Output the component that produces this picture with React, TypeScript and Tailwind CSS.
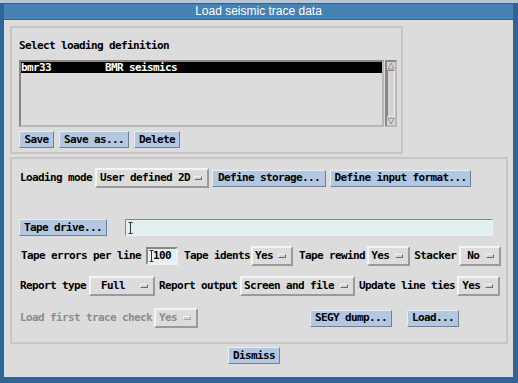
import React from "react";

const MONO = { fontFamily: '"DejaVu Sans Mono", "Liberation Mono", monospace' };

function Btn({ label, w, h = 17, className = "" }: { label: string; w: number; h?: number; className?: string }) {
  return (
    <div
      className={`flex shrink-0 items-center justify-center border border-t-[#e4eefa] border-l-[#e4eefa] border-b-[#6f7f94] border-r-[#6f7f94] bg-[#b3c7e0] text-black ${className}`}
      style={{ width: w, height: h }}
    >
      {label}
    </div>
  );
}

function Opt({
  label,
  w,
  pl = 3,
  dim = false,
  className = "",
}: {
  label: string;
  w: number;
  pl?: number;
  dim?: boolean;
  className?: string;
}) {
  return (
    <div
      className={`flex h-[20px] shrink-0 items-center border-2 border-t-[#f4f4f4] border-l-[#f4f4f4] border-b-[#9a9a9a] border-r-[#9a9a9a] bg-[#dcdcdc] pr-[5px] ${dim ? "text-[#8c8c8c]" : "text-black"} ${className}`}
      style={{ width: w, paddingLeft: pl }}
    >
      <span className="flex-1 whitespace-pre">{label}</span>
      <span className={`h-[4px] w-[8px] border border-t-[#f4f4f4] border-l-[#f4f4f4] ${dim ? "border-b-[#a8a8a8] border-r-[#a8a8a8]" : "border-b-[#6a6a6a] border-r-[#6a6a6a]"} bg-[#d0d0d0]`} />
    </div>
  );
}

function Label({ text, className = "", dim = false }: { text: string; className?: string; dim?: boolean }) {
  return <span className={`shrink-0 whitespace-pre ${dim ? "text-[#8c8c8c]" : "text-black"} ${className}`}>{text}</span>;
}

function Caret() {
  return (
    <svg width="5" height="12" viewBox="0 0 5 12" className="shrink-0">
      <path d="M0.5 0.5 H4.5 M2.5 0.5 V11.5 M0.5 11.5 H4.5" stroke="#333" strokeWidth="1" fill="none" />
    </svg>
  );
}

export default function App() {
  return (
    <div className="flex h-[383px] w-[518px] flex-col overflow-hidden bg-[#b9c5d1]">
      <div className="h-[3px] shrink-0" />
      <div className="flex flex-1 flex-col border-l-[4px] border-r-[5px] border-b-[6px] border-t-[1px] border-[#2f6494] bg-[#2f6494]">
        {/* title bar */}
        <div
          className="flex h-[15px] shrink-0 items-center justify-center bg-[#4682b4] text-[12px] leading-[15px] text-white"
          style={{ fontFamily: '"Liberation Sans", Arial, sans-serif' }}
        >
          Load seismic trace data
        </div>

        {/* dialog body */}
        <div
          className="flex flex-1 flex-col border-t border-[#5a5a5a] bg-[#dcdcdc] pl-[6px] pt-[6px] text-[11px] font-bold leading-[12px] tracking-[-0.62px]"
          style={MONO}
        >
          {/* loading definition frame */}
          <div className="flex h-[128px] w-[393px] flex-col border-2 border-[#c6c6c6] pl-[7px] pt-[12px]">
            <Label text="Select loading definition" />
            <div className="mt-[8px] flex h-[67px]">
              <div className="flex w-[365px] flex-col border-2 border-t-[#8e8484] border-l-[#8e8484] border-b-[#b8b8b8] border-r-[#b8b8b8] bg-[#dcdcdc]">
                <div className="flex h-[11px] items-center bg-black text-white">
                  <span className="w-[84px] whitespace-pre">bmr33</span>
                  <span className="whitespace-pre">BMR seismics</span>
                </div>
              </div>
              <div className="ml-[1px] flex w-[12px] flex-col border-2 border-t-[#8e8484] border-l-[#8e8484] border-b-[#b8b8b8] border-r-[#b8b8b8] bg-[#d4d4d4]">
                <svg width="8" height="8" viewBox="0 0 8 8" className="shrink-0">
                  <path d="M1 7 L4 1 L7 7 Z" fill="none" stroke="#9a9090" strokeWidth="1" />
                </svg>
                <div className="flex-1 border border-t-[#8e8484] border-l-[#8e8484] border-b-[#f0f0f0] border-r-[#f0f0f0]" />
                <svg width="8" height="8" viewBox="0 0 8 8" className="shrink-0">
                  <path d="M1 1 L4 7 L7 1 Z" fill="none" stroke="#9a9090" strokeWidth="1" />
                </svg>
              </div>
            </div>
            <div className="mt-[4px] flex gap-[5px]">
              <Btn label="Save" w={35} />
              <Btn label="Save as..." w={70} />
              <Btn label="Delete" w={46} />
            </div>
          </div>

          {/* loading parameters frame */}
          <div className="mt-[3px] flex h-[187px] w-[498px] flex-col border-2 border-[#c6c6c6] pt-[9px]">
            <div className="flex h-[20px] items-center pl-[8px]">
              <Label text="Loading mode" />
              <Opt label="User defined 2D" w={114} className="ml-[3px]" />
              <Btn label="Define storage..." w={114} className="ml-[3px]" />
              <Btn label="Define input format..." w={141} className="ml-[4px]" />
            </div>

            <div className="mt-[31px] flex h-[17px] items-center pl-[7px]">
              <Btn label="Tape drive..." w={88} />
              <div className="ml-[18px] flex h-[17px] w-[368px] items-center border border-t-[#8e8484] border-l-[#8e8484] border-b-[#f0f0f0] border-r-[#f0f0f0] bg-[#e2f0ef] pl-[2px]">
                <Caret />
              </div>
            </div>

            <div className="mt-[11px] flex h-[18px] items-center pl-[9px]">
              <Label text="Tape errors per line" />
              <div className="ml-[5px] flex h-[18px] w-[32px] items-center border-2 border-t-[#8e8484] border-l-[#8e8484] border-b-[#f0f0f0] border-r-[#f0f0f0] bg-[#e2f0ef] pl-[1px]">
                <Caret />
                <span className="-ml-[1px]">100</span>
              </div>
              <Label text="Tape idents" className="ml-[6px]" />
              <Opt label="Yes" w={42} pl={2} className="ml-[1px]" />
              <Label text="Tape rewind" className="ml-[6px]" />
              <Opt label="Yes" w={43} pl={2} className="ml-[2px]" />
              <Label text="Stacker" className="ml-[4px]" />
              <Opt label="No" w={42} pl={6} className="ml-[3px]" />
            </div>

            <div className="mt-[11px] flex h-[20px] items-center pl-[8px]">
              <Label text="Report type" />
              <Opt label="Full" w={66} pl={10} className="ml-[3px]" />
              <Label text="Report output" className="ml-[4px]" />
              <Opt label="Screen and file" w={115} pl={2} className="ml-[3px]" />
              <Label text="Update line ties" className="ml-[4px]" />
              <Opt label="Yes" w={43} pl={3} className="ml-[2px]" />
            </div>

            <div className="mt-[12px] flex h-[20px] items-center pl-[8px]">
              <Label text="Load first trace check" dim />
              <Opt label="Yes" w={44} pl={3} dim className="ml-[2px]" />
              <Btn label="SEGY dump..." w={82} className="ml-[112px]" />
              <Btn label="Load..." w={52} className="ml-[15px]" />
            </div>
          </div>

          <div className="mt-[3px] flex pl-[218px]">
            <Btn label="Dismiss" w={52} />
          </div>
        </div>
      </div>
    </div>
  );
}
